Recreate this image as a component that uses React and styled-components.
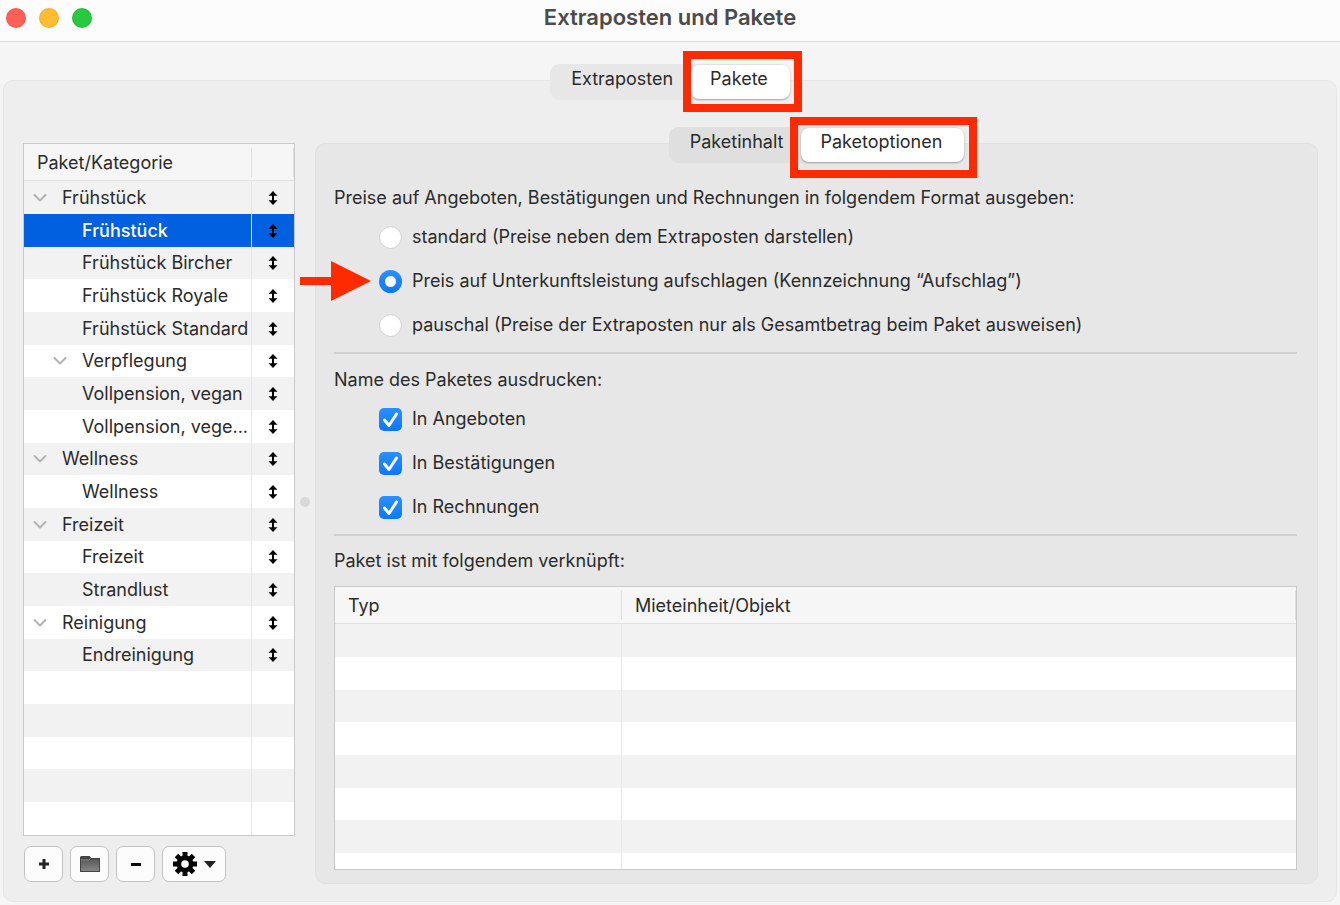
import React, { useState } from 'react';
import styled, { createGlobalStyle, css } from 'styled-components';

const GlobalStyle = createGlobalStyle`
	* {
		box-sizing: border-box;
	}

	body {
		margin: 0;
		background-color: #f5f5f5;
		color: #2b2b2b;
		font-family: Inter, 'Liberation Sans', sans-serif;
		font-size: 18px;
		line-height: 24px;
	}

	button,
	input {
		font: inherit;
		color: inherit;
		margin: 0;
	}
`;

const Window = styled.div`
	display: flex;
	flex-direction: column;
	min-height: 100vh;
`;

const TitleBar = styled.header`
	display: grid;
	grid-template-columns: 1fr auto 1fr;
	height: 42px;
	padding: 5px 6px 0;
	background-color: #fcfcfc;
	border-bottom: 1px solid #d9d9d9;
`;

const Lights = styled.div`
	display: flex;
	gap: 13px;
	padding-top: 3px;
`;

const Light = styled.button`
	width: 20px;
	height: 20px;
	padding: 0;
	border: 1px solid rgba(0, 0, 0, 0.06);
	border-radius: 50%;
	background-color: ${(props) => props.$color};
`;

const Title = styled.h1`
	margin: 0;
	color: #4b4b4b;
	font-size: 22px;
	font-weight: 600;
	line-height: 24px;
`;

const Content = styled.main`
	display: flex;
	flex: 1;
	flex-direction: column;
	padding: 22px 3px 3px;
`;

const TabStrip = styled.div`
	position: relative;
	z-index: 1;
	display: flex;
	align-self: center;
	height: 36px;
	margin-bottom: -20px;
	padding: 1px 0;
	border-radius: 9px;
	background-color: ${(props) => props.$color};
`;

const Tab = styled.button`
	padding: 0 18px 6px 21px;
	border: none;
	border-radius: 8px;
	background: none;
	white-space: nowrap;

	${(props) =>
		props.$active &&
		css`
			padding: 0 22px 6px 19px;
			background-color: white;
			box-shadow: 0 1px 2px rgba(0, 0, 0, 0.3);
		`}
`;

const MarkedTab = styled.div`
	position: relative;
	display: flex;
`;

const Marker = styled.span`
	position: absolute;
	inset: ${(props) => props.$inset};
	border: 8px solid #ff2a00;
	pointer-events: none;
`;

const OuterPanel = styled.section`
	display: flex;
	flex: 1;
	padding: 46px 18px 17px 19px;
	border: 1px solid #e6e6e6;
	border-radius: 10px;
	background-color: #eeeeee;
`;

const Sidebar = styled.aside`
	display: flex;
	flex: none;
	flex-direction: column;
	width: 272px;
	padding: 16px 0 2px;
`;

const Splitter = styled.div`
	display: flex;
	flex: none;
	align-items: center;
	justify-content: center;
	width: 20px;
	padding-bottom: 8px;
`;

const Dot = styled.span`
	width: 10px;
	height: 10px;
	border-radius: 50%;
	background-color: #d8d8d8;
`;

const TableFrame = styled.div`
	flex: 1 1 0;
	min-height: 200px;
	overflow: hidden;
	border: 1px solid #c9c9c9;
	background-color: white;
`;

const Table = styled.table`
	width: 100%;
	table-layout: fixed;
	border-collapse: separate;
	border-spacing: 0;
`;

const HeadCell = styled.th`
	width: ${(props) => props.$width || 'auto'};
	height: 37px;
	padding: 1px 0 0 13px;
	border-bottom: 1px solid #e2e2e2;
	background: linear-gradient(#dedede, #dedede) right center / 1px 29px no-repeat #f6f6f6;
	font-weight: 400;
	text-align: left;
`;

const Row = styled.tr`
	height: 33px;
	background-color: white;

	&:nth-child(odd) {
		background-color: #f2f2f2;
	}

	&:nth-child(3n) {
		height: 32px;
	}

	${(props) =>
		props.$selected &&
		css`
			&& {
				background-color: #0060df;
				color: white;
				font-weight: 500;
			}
		`}
`;

const Cell = styled.td`
	padding: 0;
	overflow: hidden;
	white-space: nowrap;

	&:not(:last-child) {
		border-right: 1px solid #e6e6e6;
	}
`;

const TreeLabel = styled.div`
	display: flex;
	align-items: center;
	gap: 15px;
	padding-left: ${(props) => (props.$level ? '29px' : '9px')};
`;

const Toggle = styled.button`
	display: flex;
	flex: none;
	width: 14px;
	padding: 0;
	border: none;
	background: none;
`;

const ToggleSpace = styled.span`
	flex: none;
	width: 14px;
`;

const SortCell = styled(Cell)`
	color: black;

	svg {
		display: block;
		margin: 0 auto;
	}
`;

const Toolbar = styled.div`
	display: flex;
	gap: 7px;
	margin-top: 10px;
	padding-left: 1px;
`;

const ToolButton = styled.button`
	display: flex;
	align-items: center;
	justify-content: center;
	gap: 7px;
	width: ${(props) => (props.$wide ? '64px' : '39px')};
	height: 36px;
	padding: 0;
	border: 1px solid #c2c2c2;
	border-radius: 7px;
	background-color: #fcfcfc;
`;

const Main = styled.div`
	display: flex;
	flex: 1;
	flex-direction: column;
	min-width: 0;
`;

const InnerPanel = styled.section`
	display: flex;
	flex: 1;
	flex-direction: column;
	padding: 42px 20px 13px 18px;
	border: 1px solid #e1e1e1;
	border-radius: 10px;
	background-color: #e7e7e7;
`;

const Group = styled.fieldset`
	display: flex;
	flex-direction: column;
	min-width: 0;
	margin: 0;
	padding: 0;
	border: none;
`;

const GroupTitle = styled.legend`
	margin: 0 0 15px;
	padding: 0;
`;

const TableTitle = styled.h2`
	margin: 0 0 14px;
	font-size: 18px;
	font-weight: 400;
	line-height: 22px;
`;

const Options = styled.div`
	display: flex;
	flex-direction: column;
	align-items: flex-start;
	gap: 20px;
	padding-left: 45px;
`;

const Option = styled.label`
	position: relative;
	display: flex;
	align-items: center;
	gap: 10px;
`;

const Radio = styled.input.attrs({ type: 'radio' })`
	appearance: none;
	width: 23px;
	height: 23px;
	border: 1px solid #d2d2d2;
	border-radius: 50%;
	background-color: white;

	&:checked {
		border: none;
		background: radial-gradient(circle, white 5px, transparent 6px), linear-gradient(#2b8fff, #0a78ff);
	}
`;

const Checkbox = styled.input.attrs({ type: 'checkbox' })`
	appearance: none;
	grid-area: 1 / 1;
	width: 23px;
	height: 23px;
	border: 1px solid #d2d2d2;
	border-radius: 5px;
	background-color: white;

	&:checked {
		border: none;
		background: linear-gradient(#2b8fff, #0a78ff);
	}
`;

const CheckWrapper = styled.span`
	display: grid;

	svg {
		grid-area: 1 / 1;
		pointer-events: none;
	}
`;

const Arrow = styled.svg`
	position: absolute;
	left: -79px;
	top: -8px;
`;

const Divider = styled.hr`
	width: 100%;
	height: 2px;
	margin: 15px 0 14px;
	border: none;
	background-color: #d0d0d0;
`;

const ChevronIcon = () => (
	<svg width="14" height="10" viewBox="0 0 14 10" fill="none" stroke="#b4b4b4" strokeWidth="2" strokeLinecap="round" strokeLinejoin="round">
		<path d="M1.5 2 7 7.500 12.500 2" />
	</svg>
);

const SortIcon = () => (
	<svg width="10" height="14" viewBox="0 0 10 14" fill="currentColor">
		<path d="M5 0 9.500 4.800H6v4.400h3.500L5 14 .5 9.200H4V4.800H.5z" />
	</svg>
);

const PlusIcon = () => (
	<svg width="12" height="12" viewBox="0 0 12 12" stroke="#222" strokeWidth="3">
		<path d="M6 1v10M1 6h10" />
	</svg>
);

const MinusIcon = () => (
	<svg width="12" height="12" viewBox="0 0 12 12" stroke="black" strokeWidth="3">
		<path d="M1 6.500h10" />
	</svg>
);

const FolderIcon = () => (
	<svg width="20" height="18" viewBox="0 0 20 18">
		<defs>
			<linearGradient id="folder" x1="0" y1="0" x2="0" y2="1">
				<stop offset="0" stopColor="#5a5a5a" />
				<stop offset="1" stopColor="#858585" />
			</linearGradient>
		</defs>
		<path d="M0 17V2.500Q0 1 1.500 1h7.500q1 0 1.500 1l.5 1h9v14z" fill="#444" />
		<path d="M1 6h8l2-1.500h8V16H1z" fill="url(#folder)" />
		<path d="M1 5h8l1.500-1.500" fill="none" stroke="#999" />
	</svg>
);

const GearIcon = () => (
	<svg width="24" height="24" viewBox="-12 -12 24 24">
		{[0, 45, 90, 135].map((angle) => (
			<rect key={angle} x="-2.500" y="-12" width="5" height="24" transform={`rotate(${angle})`} />
		))}
		<circle r="8.500" />
		<circle r="3.800" fill="#fcfcfc" />
	</svg>
);

const CaretIcon = () => (
	<svg width="12" height="7" viewBox="0 0 12 7" fill="#222">
		<path d="M0 0h12L6 7z" />
	</svg>
);

const CheckIcon = () => (
	<svg width="23" height="23" viewBox="0 0 23 23" fill="none" stroke="white" strokeWidth="3" strokeLinecap="round" strokeLinejoin="round">
		<path d="m5.500 12 4.500 5.500L17.500 6" />
	</svg>
);

const packages = [
	{ name: 'Frühstück', level: 0, open: true },
	{ name: 'Frühstück', level: 1, selected: true },
	{ name: 'Frühstück Bircher', level: 1 },
	{ name: 'Frühstück Royale', level: 1 },
	{ name: 'Frühstück Standard', level: 1 },
	{ name: 'Verpflegung', level: 1, open: true },
	{ name: 'Vollpension, vegan', level: 1 },
	{ name: 'Vollpension, vege...', level: 1 },
	{ name: 'Wellness', level: 0, open: true },
	{ name: 'Wellness', level: 1 },
	{ name: 'Freizeit', level: 0, open: true },
	{ name: 'Freizeit', level: 1 },
	{ name: 'Strandlust', level: 1 },
	{ name: 'Reinigung', level: 0, open: true },
	{ name: 'Endreinigung', level: 1 },
];

const priceFormats = [
	{ id: 'standard', label: 'standard (Preise neben dem Extraposten darstellen)' },
	{ id: 'surcharge', label: 'Preis auf Unterkunftsleistung aufschlagen (Kennzeichnung “Aufschlag”)', arrow: true },
	{ id: 'flat', label: 'pauschal (Preise der Extraposten nur als Gesamtbetrag beim Paket ausweisen)' },
];

const printTargets = ['In Angeboten', 'In Bestätigungen', 'In Rechnungen'];

const emptyRows = (count) =>
	Array.from({ length: count }, (_, i) => (
		<Row key={`empty-${i}`}>
			<Cell />
			<Cell />
		</Row>
	));

const PackageList = () => (
	<Sidebar>
		<TableFrame>
			<Table>
				<thead>
					<tr>
						<HeadCell scope="col">Paket/Kategorie</HeadCell>
						<HeadCell scope="col" $width="42px" aria-label="Reihenfolge" />
					</tr>
				</thead>
				<tbody>
					{packages.map((item, i) => (
						<Row key={i} $selected={item.selected}>
							<Cell>
								<TreeLabel $level={item.level}>
									{item.open ? (
										<Toggle aria-label="Zuklappen">
											<ChevronIcon />
										</Toggle>
									) : (
										<ToggleSpace />
									)}
									{item.name}
								</TreeLabel>
							</Cell>
							<SortCell>
								<SortIcon />
							</SortCell>
						</Row>
					))}
					{emptyRows(5)}
				</tbody>
			</Table>
		</TableFrame>
		<Toolbar>
			<ToolButton aria-label="Hinzufügen">
				<PlusIcon />
			</ToolButton>
			<ToolButton aria-label="Neue Kategorie">
				<FolderIcon />
			</ToolButton>
			<ToolButton aria-label="Entfernen">
				<MinusIcon />
			</ToolButton>
			<ToolButton $wide aria-label="Aktionen">
				<GearIcon />
				<CaretIcon />
			</ToolButton>
		</Toolbar>
	</Sidebar>
);

const PackageOptions = () => {
	const [format, setFormat] = useState('surcharge');
	const [targets, setTargets] = useState(printTargets);

	const toggleTarget = (name) => {
		setTargets(targets.includes(name) ? targets.filter((t) => t !== name) : [...targets, name]);
	};

	return (
		<InnerPanel>
			<Group>
				<GroupTitle>Preise auf Angeboten, Bestätigungen und Rechnungen in folgendem Format ausgeben:</GroupTitle>
				<Options>
					{priceFormats.map(({ id, label, arrow }) => (
						<Option key={id}>
							{arrow && (
								<Arrow width="72" height="40" viewBox="0 0 72 40" fill="#ff2a00">
									<path d="M0 16h31V0l40 20-40 20V24H0z" />
								</Arrow>
							)}
							<Radio name="format" checked={format === id} onChange={() => setFormat(id)} />
							{label}
						</Option>
					))}
				</Options>
			</Group>
			<Divider />
			<Group>
				<GroupTitle>Name des Paketes ausdrucken:</GroupTitle>
				<Options>
					{printTargets.map((name) => (
						<Option key={name}>
							<CheckWrapper>
								<Checkbox checked={targets.includes(name)} onChange={() => toggleTarget(name)} />
								<CheckIcon />
							</CheckWrapper>
							{name}
						</Option>
					))}
				</Options>
			</Group>
			<Divider />
			<TableTitle>Paket ist mit folgendem verknüpft:</TableTitle>
			<TableFrame>
				<Table>
					<thead>
						<tr>
							<HeadCell scope="col" $width="287px">
								Typ
							</HeadCell>
							<HeadCell scope="col">Mieteinheit/Objekt</HeadCell>
						</tr>
					</thead>
					<tbody>{emptyRows(8)}</tbody>
				</Table>
			</TableFrame>
		</InnerPanel>
	);
};

const App = () => (
	<>
		<GlobalStyle />
		<Window>
			<TitleBar>
				<Lights>
					<Light $color="#ff5f57" aria-label="Schließen" />
					<Light $color="#febc2e" aria-label="Minimieren" />
					<Light $color="#28c840" aria-label="Vergrößern" />
				</Lights>
				<Title>Extraposten und Pakete</Title>
			</TitleBar>
			<Content>
				<TabStrip $color="#e7e7e7">
					<Tab>Extraposten</Tab>
					<MarkedTab>
						<Tab $active>Pakete</Tab>
						<Marker $inset="-14px -12px -13px -8px" />
					</MarkedTab>
				</TabStrip>
				<OuterPanel>
					<PackageList />
					<Splitter>
						<Dot />
					</Splitter>
					<Main>
						<TabStrip $color="#dfdfdf">
							<Tab>Paketinhalt</Tab>
							<MarkedTab>
								<Tab $active>Paketoptionen</Tab>
								<Marker $inset="-11px -13px -16px -11px" />
							</MarkedTab>
						</TabStrip>
						<PackageOptions />
					</Main>
				</OuterPanel>
			</Content>
		</Window>
	</>
);

export default App;
